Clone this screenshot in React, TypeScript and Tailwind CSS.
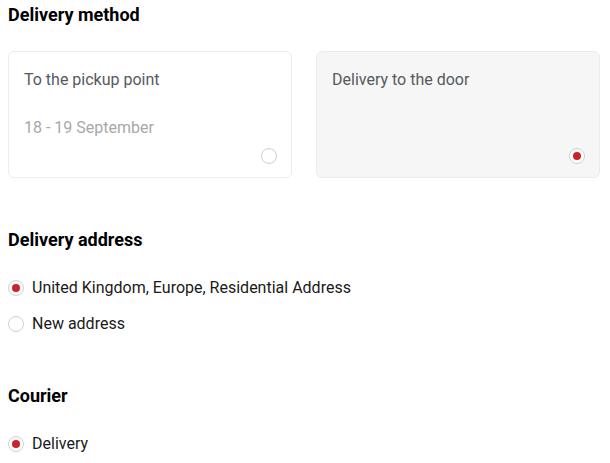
import React from "react";

function Radio({ checked }: { checked: boolean }) {
  return (
    <span className="flex h-4 w-4 shrink-0 items-center justify-center rounded-full border border-[#cfcfcf] bg-white">
      {checked && <span className="h-2 w-2 rounded-full bg-[#cc2229]" />}
    </span>
  );
}

function Option({ label, checked }: { label: string; checked: boolean }) {
  return (
    <div className="flex h-6 items-center gap-2 text-[16px] text-[#1a1a1a]">
      <Radio checked={checked} />
      <span>{label}</span>
    </div>
  );
}

export default function App() {
  return (
    <div
      className="bg-white px-2 pt-[3px] pr-[10px]"
      style={{ fontFamily: "Roboto, 'Liberation Sans', sans-serif" }}
    >
      <h2 className="text-[18px] font-bold leading-6 text-black">Delivery method</h2>
      <div className="mt-6 grid grid-cols-2 gap-6">
        <div className="flex h-[127px] flex-col rounded-md border border-[#ececec] bg-white pl-[15px] pr-[14px] pt-4 pb-[13px]">
          <div className="text-[16px] leading-6 text-[#555a60]">To the pickup point</div>
          <div className="mt-6 text-[16px] leading-6 text-[#a8a8a8]">18 - 19 September</div>
          <div className="mt-auto self-end">
            <Radio checked={false} />
          </div>
        </div>
        <div className="flex h-[127px] flex-col rounded-md border border-[#ececec] bg-[#f6f6f6] pl-[15px] pr-[14px] pt-4 pb-[13px]">
          <div className="text-[16px] leading-6 text-[#555a60]">Delivery to the door</div>
          <div className="mt-auto self-end">
            <Radio checked={true} />
          </div>
        </div>
      </div>

      <h2 className="mt-[50px] text-[18px] font-bold leading-6 text-black">Delivery address</h2>
      <div className="mt-6 flex flex-col gap-3">
        <Option label="United Kingdom, Europe, Residential Address" checked={true} />
        <Option label="New address" checked={false} />
      </div>

      <h2 className="mt-12 text-[18px] font-bold leading-6 text-black">Courier</h2>
      <div className="mt-6 flex flex-col gap-3">
        <Option label="Delivery" checked={true} />
      </div>
    </div>
  );
}
